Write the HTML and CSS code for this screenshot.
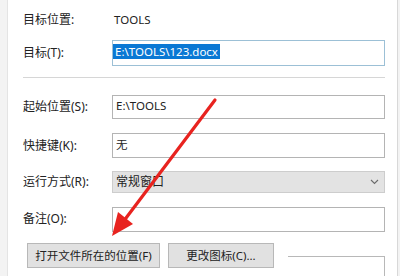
FILE: index.html
```html
<!DOCTYPE html>
<html lang="zh-CN">
  <head>
    <meta charset="UTF-8" />
    <meta name="viewport" content="width=device-width, initial-scale=1.0" />
    <title>快捷方式属性</title>
    <link rel="stylesheet" href="styles.css">
  </head>
  <body>
    <div class="panel">
      <div class="row row-info">
        <span class="label">目标位置:</span>
        <span class="value">TOOLS</span>
      </div>

      <div class="row row-target">
        <label class="label" for="target">目标(T):</label>
        <div class="field field-focus" id="target">
          <span class="selected">E:\TOOLS\123.docx</span>
        </div>
      </div>

      <div class="divider"></div>

      <div class="row row-start">
        <label class="label">起始位置(S):</label>
        <div class="field">E:\TOOLS</div>
      </div>

      <div class="row row-hotkey">
        <label class="label">快捷键(K):</label>
        <div class="field">无</div>
      </div>

      <div class="row row-run">
        <label class="label">运行方式(R):</label>
        <div class="field field-select">
          <span>常规窗口</span>
          <svg class="chevron" width="9" height="6" viewBox="0 0 9 6">
            <path d="M1 1 L4.5 4.5 L8 1" fill="none" stroke="#6b6b6b" stroke-width="1.1" />
          </svg>
        </div>
      </div>

      <div class="row row-comment">
        <label class="label">备注(O):</label>
        <div class="field"></div>
      </div>

      <div class="button-row">
        <button class="btn btn-open">打开文件所在的位置(F)</button>
        <button class="btn btn-icon">更改图标(C)...</button>
        <div class="btn-ghost"></div>
      </div>
    </div>

    <!-- red annotation arrow drawn over the dialog -->
    <svg class="arrow" width="400" height="276" viewBox="0 0 400 276">
      <line x1="215" y1="100" x2="123" y2="222" stroke="#e8231f" stroke-width="3.2" stroke-linecap="round" />
      <polygon points="112,236 118,212 133,224" fill="#e8231f" />
    </svg>
  </body>
</html>
```

FILE: styles.css
```css
* {
  box-sizing: border-box;
  margin: 0;
  padding: 0;
}

body {
  width: 400px;
  height: 276px;
  overflow: hidden;
  background-color: #f3f3f3;
  color: #222;
  font-family: "Noto Sans", "Noto Sans CJK SC", sans-serif;
  font-size: 12px;
  position: relative;
}

.panel {
  margin: 0 2px 0 7px;
  height: 276px;
  background-color: #ffffff;
  border-left: 1px solid #e4e4e4;
  border-right: 1px solid #d8d8d8;
  padding: 8px 12px 0 15px;
  display: flex;
  flex-direction: column;
}

.row {
  display: flex;
  align-items: center;
}

.label {
  width: 89px;
  flex-shrink: 0;
  line-height: 16px;
}

.value {
  padding-left: 2px;
  font-size: 11.5px;
}

.row-info {
  height: 24px;
}

.row-target {
  margin-top: 9px;
  height: 26px;
}

.row-start {
  margin-top: 17px;
  height: 25px;
}

.row-hotkey {
  margin-top: 14px;
  height: 26px;
}

.row-run {
  margin-top: 13px;
  height: 22px;
}

.row-comment {
  margin-top: 14px;
  height: 26px;
}

.field {
  flex: 1;
  height: 100%;
  border: 1px solid #b4b4b4;
  background-color: #ffffff;
  padding: 0 3px 3px 3px;
  display: flex;
  align-items: center;
  font-size: 11.5px;
}

.field-focus {
  border-color: #9cc0d6;
  padding-left: 0;
}

.selected {
  background-color: #0a78d4;
  color: #ffffff;
  line-height: 15px;
  padding: 0 2px 0 2px;
}

.field-select {
  background-color: #e3e3e3;
  border-color: #cdcdcd;
  justify-content: space-between;
  padding: 0 5px 1px 3px;
  font-size: 12px;
}

.chevron {
  margin-top: 2px;
}

.divider {
  margin-top: 11px;
  height: 1px;
  background-color: #d6d6d6;
}

.button-row {
  margin-top: 11px;
  display: flex;
  align-items: flex-start;
  padding-left: 4px;
}

.btn {
  height: 25px;
  background-color: #e1e1e1;
  border: 1px solid #b8b8b8;
  font-family: "Noto Sans", "Noto Sans CJK SC", sans-serif;
  font-size: 11.5px;
  color: #222;
  padding-bottom: 1px;
}

.btn-open {
  width: 133px;
}

.btn-icon {
  width: 106px;
  margin-left: 8px;
}

.btn-ghost {
  margin-left: auto;
  margin-top: 13px;
  width: 97px;
  height: 20px;
  border-top: 1px solid #b8b8b8;
  border-right: 1px solid #b8b8b8;
}

.arrow {
  position: absolute;
  top: 0;
  left: 0;
}
```
